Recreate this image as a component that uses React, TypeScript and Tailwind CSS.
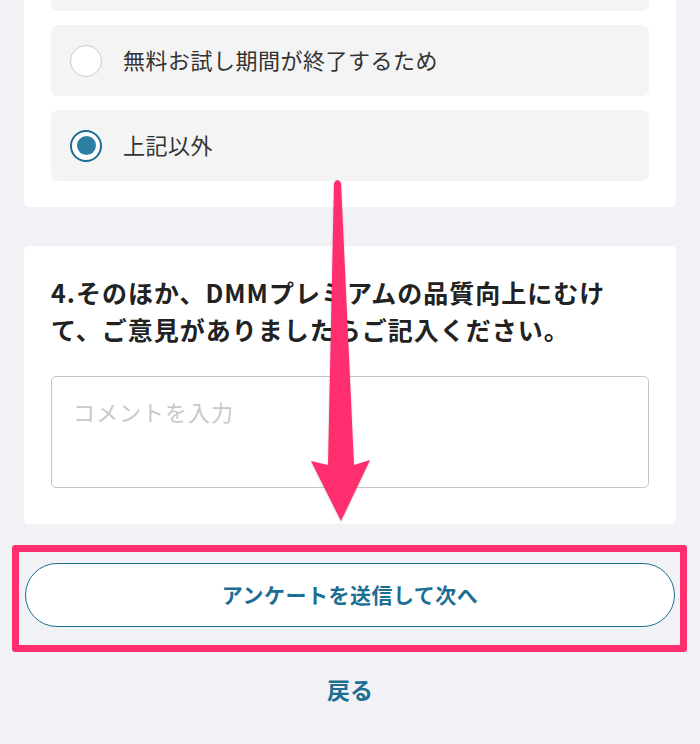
import { useState } from "react"

const options = [
  "他のサービスを利用するため",
  "無料お試し期間が終了するため",
  "上記以外",
]

function Radio({ checked }: { checked: boolean }) {
  return checked ? (
    <span className="flex h-[32px] w-[32px] shrink-0 items-center justify-center rounded-full border-2 border-[#1d6e93] bg-white">
      <span className="h-[19px] w-[19px] rounded-full bg-[#2b7fa3]" />
    </span>
  ) : (
    <span className="h-[32px] w-[32px] shrink-0 rounded-full border-[1.5px] border-[#cbcbcb] bg-white" />
  )
}

export default function App() {
  const [selected, setSelected] = useState(2)
  const [comment, setComment] = useState("")

  return (
    <div
      className="relative h-[744px] w-[700px] overflow-hidden bg-[#f1f2f6] text-[#333]"
      style={{ fontFamily: '"Noto Sans CJK JP", "Noto Sans", sans-serif' }}
    >
      <div className="-mt-[60px] flex flex-col">
        {/* 3. choices (card continues above the fold) */}
        <div className="mx-[24px] rounded-b-[5px] bg-white px-[27px] pb-[26px]">
          <div className="flex flex-col gap-[14px]">
            {options.map((label, i) => (
              <button
                key={label}
                type="button"
                onClick={() => setSelected(i)}
                className="flex h-[71px] items-center gap-[21px] rounded-[7px] bg-[#f4f4f5] px-[19px] text-left"
              >
                <Radio checked={selected === i} />
                <span className="pb-[4px] text-[22px] leading-none tracking-[0.5px] text-[#333]">
                  {label}
                </span>
              </button>
            ))}
          </div>
        </div>

        {/* 4. free comment */}
        <div className="mx-[24px] mt-[39px] rounded-[5px] bg-white px-[27px] pb-[36px] pt-[28px]">
          <h2 className="pr-[30px] text-[25px] font-bold leading-[37px] tracking-[1px] text-[#222]">
            4.そのほか、DMMプレミアムの品質向上にむけて、ご意見がありましたらご記入ください。
          </h2>
          <textarea
            value={comment}
            onChange={(e) => setComment(e.target.value)}
            placeholder="コメントを入力"
            className="mt-[28px] block h-[112px] w-full resize-none rounded-[5px] border border-[#c6c6c6] px-[21px] py-[18px] text-[22px] leading-[32px] tracking-[1px] outline-none placeholder:text-[#c8c8c8]"
          />
        </div>

        {/* submit */}
        <div className="relative mx-[25px] mt-[39px]">
          <button
            type="button"
            className="flex h-[64px] w-full items-center justify-center rounded-full border-[1.5px] border-[#1d6e93] bg-white text-[21px] font-bold tracking-[0.5px] text-[#1d6e93]"
          >
            アンケートを送信して次へ
          </button>
          <div className="pointer-events-none absolute -bottom-[25px] -left-[13px] -right-[12px] -top-[18px] rounded-[3px] border-[7px] border-[#ff2e6e]" />
        </div>

        <button
          type="button"
          className="mx-auto mt-[46px] text-[23px] font-bold leading-[32px] text-[#1d6e93]"
        >
          戻る
        </button>
      </div>

      {/* annotation arrow */}
      <svg
        className="pointer-events-none absolute left-0 top-0"
        width="700"
        height="744"
        viewBox="0 0 700 744"
      >
        <path
          d="M334 183 Q337.5 177 341 183 L354 465 L370 460 L341 521 L311 461 L328 465 Z"
          fill="#ff2e6e"
          style={{ filter: "drop-shadow(0 1px 1px rgba(0,0,0,0.2))" }}
        />
      </svg>
    </div>
  )
}
